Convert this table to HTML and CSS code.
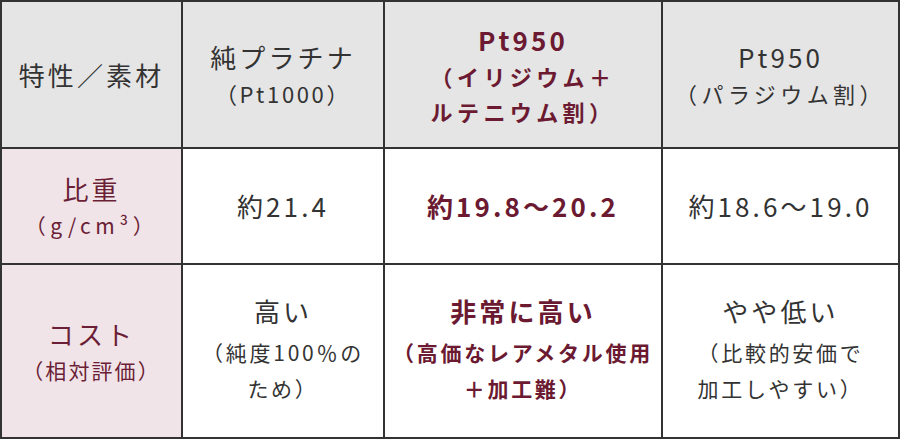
FILE: index.html
```html
<!DOCTYPE html>
<html lang="ja">
<head>
<meta charset="utf-8">
<link rel="stylesheet" href="styles.css">
</head>
<body>
<div class="table">
  <div class="cell head"><span class="main">特性／素材</span></div>
  <div class="cell head"><span class="main">純プラチナ</span><span class="sub latin">（Pt1000）</span></div>
  <div class="cell head accent bold"><span class="main">Pt950</span><span class="sub">（イリジウム＋</span><span class="sub">ルテニウム割）</span></div>
  <div class="cell head"><span class="main">Pt950</span><span class="sub">（パラジウム割）</span></div>

  <div class="cell label"><span class="main">比重</span><span class="sub unit">（g/cm³）</span></div>
  <div class="cell"><span class="main">約21.4</span></div>
  <div class="cell accent bold"><span class="main">約19.8～20.2</span></div>
  <div class="cell"><span class="main">約18.6～19.0</span></div>

  <div class="cell label"><span class="main">コスト</span><span class="sub">（相対評価）</span></div>
  <div class="cell cost"><span class="main">高い</span><span class="sub">（純度100％の</span><span class="sub">ため）</span></div>
  <div class="cell cost accent bold"><span class="main">非常に高い</span><span class="sub">（高価なレアメタル使用</span><span class="sub">＋加工難）</span></div>
  <div class="cell cost"><span class="main">やや低い</span><span class="sub">（比較的安価で</span><span class="sub">加工しやすい）</span></div>
</div>
</body>
</html>
```
FILE: styles.css
```css
html, body {
  margin: 0;
  padding: 0;
  background: #ffffff;
}
body {
  font-family: "Noto Sans CJK JP", "Noto Sans", sans-serif;
  color: #333333;
}
.table {
  width: 900px;
  height: 439px;
  box-sizing: border-box;
  display: grid;
  grid-template-columns: 179px 200px 276px 235px;
  grid-template-rows: 145px 114px 172px;
  gap: 2px;
  padding: 2px;
  background: #333333;
}
.cell {
  background: #ffffff;
  display: flex;
  flex-direction: column;
  align-items: center;
  justify-content: center;
  text-align: center;
}
.head {
  background: #e5e5e5;
}
.label {
  background: #f1e4e9;
  color: #6b1f36;
}
.accent {
  color: #6b1a31;
}
.bold {
  font-weight: 700;
}
.main {
  font-size: 26px;
  line-height: 38px;
  letter-spacing: 0.12em;
}
.sub {
  font-size: 21px;
  line-height: 35px;
  letter-spacing: 0.1em;
}
.head .sub {
  font-size: 22px;
  letter-spacing: 0.2em;
}
.head .sub.latin {
  letter-spacing: 0.12em;
}
.sub.unit {
  letter-spacing: 0.22em;
}
.cell.cost {
  padding-bottom: 4px;
}
.cost .main {
  margin-bottom: 4px;
}
.cost .sub {
  font-size: 21px;
  line-height: 36px;
  letter-spacing: 0.13em;
}
```
